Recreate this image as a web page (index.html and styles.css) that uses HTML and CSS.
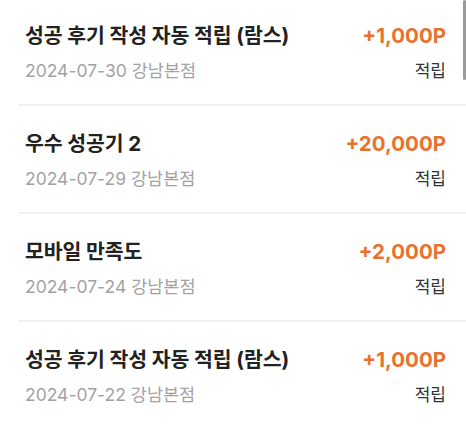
FILE: index.html
```html
<!DOCTYPE html>
<html lang="ko">
<head>
<meta charset="utf-8">
<link rel="stylesheet" href="styles.css">
</head>
<body>
<div class="list">
  <div class="item">
    <div class="row">
      <span class="title">성공 후기 작성 자동 적립 (람스)</span>
      <span class="amount">+1,000P</span>
    </div>
    <div class="row sub">
      <span class="date">2024-07-30 강남본점</span>
      <span class="type">적립</span>
    </div>
  </div>
  <div class="item">
    <div class="row">
      <span class="title">우수 성공기 2</span>
      <span class="amount">+20,000P</span>
    </div>
    <div class="row sub">
      <span class="date">2024-07-29 강남본점</span>
      <span class="type">적립</span>
    </div>
  </div>
  <div class="item">
    <div class="row">
      <span class="title">모바일 만족도</span>
      <span class="amount">+2,000P</span>
    </div>
    <div class="row sub">
      <span class="date">2024-07-24 강남본점</span>
      <span class="type">적립</span>
    </div>
  </div>
  <div class="item">
    <div class="row">
      <span class="title">성공 후기 작성 자동 적립 (람스)</span>
      <span class="amount">+1,000P</span>
    </div>
    <div class="row sub">
      <span class="date">2024-07-22 강남본점</span>
      <span class="type">적립</span>
    </div>
  </div>
</div>
<div class="scrollbar"></div>
</body>
</html>
```

FILE: styles.css
```css
html, body {
  margin: 0;
  padding: 0;
  background: #ffffff;
  overflow: hidden;
}
body {
  width: 466px;
  height: 426px;
  position: relative;
  font-family: Inter, "Noto Sans CJK KR", "Noto Sans", sans-serif;
}
.list {
  margin-top: -2px;
  padding-left: 18px;
}
.item {
  padding: 23px 20px 21px 7px;
  border-bottom: 2px solid #f2f2f2;
  display: flex;
  flex-direction: column;
  gap: 8px;
}
.row {
  display: flex;
  justify-content: space-between;
  align-items: center;
}
.title {
  font-size: 20.5px;
  font-weight: 700;
  color: #222222;
  line-height: 30px;
  letter-spacing: -0.1px;
}
.amount {
  font-size: 20.5px;
  font-weight: 700;
  color: #e8722c;
  line-height: 30px;
}
.sub {
  line-height: 24px;
}
.date {
  font-size: 17.5px;
  color: #a2a2a6;
  line-height: 24px;
}
.type {
  font-size: 17px;
  color: #333333;
  line-height: 24px;
}
.scrollbar {
  position: absolute;
  top: 0;
  right: 0;
  width: 3px;
  height: 80px;
  background: #9a9a9a;
  border-radius: 2px;
}
```
